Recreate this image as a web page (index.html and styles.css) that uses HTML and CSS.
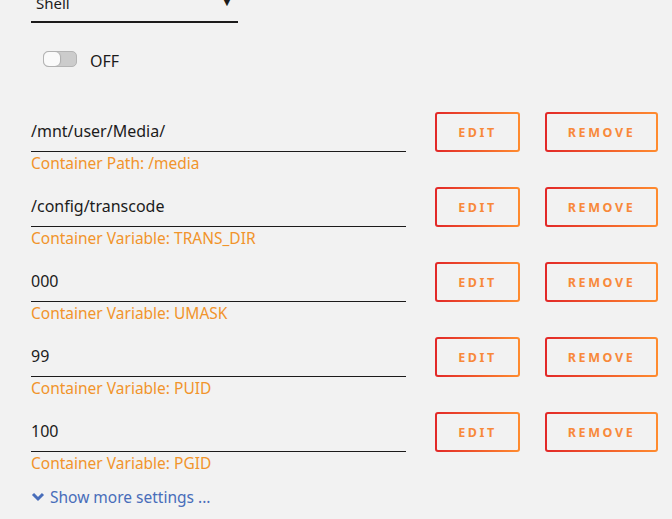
FILE: index.html
```html
<!DOCTYPE html>
<html lang="en">
<head>
    <meta charset="UTF-8">
    <title>Container settings</title>
    <link rel="stylesheet" href="styles.css">
</head>
<body>
    <div class="page">
        <div class="select">
            <span>Shell</span>
            <span class="caret">&#9660;</span>
        </div>

        <div class="switch-row">
            <span class="switch"><span class="knob"></span></span>
            <span class="switch-label">OFF</span>
        </div>

        <div class="rows">
            <div class="row">
                <div class="field">
                    <div class="value">/mnt/user/Media/</div>
                    <div class="hint">Container Path: /media</div>
                </div>
                <button class="btn btn-edit">EDIT</button>
                <button class="btn btn-remove">REMOVE</button>
            </div>
            <div class="row">
                <div class="field">
                    <div class="value">/config/transcode</div>
                    <div class="hint">Container Variable: TRANS_DIR</div>
                </div>
                <button class="btn btn-edit">EDIT</button>
                <button class="btn btn-remove">REMOVE</button>
            </div>
            <div class="row">
                <div class="field">
                    <div class="value">000</div>
                    <div class="hint">Container Variable: UMASK</div>
                </div>
                <button class="btn btn-edit">EDIT</button>
                <button class="btn btn-remove">REMOVE</button>
            </div>
            <div class="row">
                <div class="field">
                    <div class="value">99</div>
                    <div class="hint">Container Variable: PUID</div>
                </div>
                <button class="btn btn-edit">EDIT</button>
                <button class="btn btn-remove">REMOVE</button>
            </div>
            <div class="row">
                <div class="field">
                    <div class="value">100</div>
                    <div class="hint">Container Variable: PGID</div>
                </div>
                <button class="btn btn-edit">EDIT</button>
                <button class="btn btn-remove">REMOVE</button>
            </div>
        </div>

        <a class="more" href="#">
            <svg width="14" height="10" viewBox="0 0 14 10"><path d="M2 2 L7 7 L12 2" fill="none" stroke="#486dba" stroke-width="3"/></svg>
            Show more settings ...
        </a>
    </div>
</body>
</html>
```

FILE: styles.css
```css
*{
    margin: 0;
    padding: 0;
    box-sizing: border-box;
}
body{
    background: #f2f2f2;
    font-family: "Noto Sans", "Open Sans", sans-serif;
    color: #1c1b1b;
    overflow: hidden;
}
.page{
    padding-left: 31px;
    margin-top: -14px;
}
.select{
    width: 207px;
    height: 37px;
    display: flex;
    justify-content: space-between;
    align-items: flex-end;
    padding: 0 5px 8px 5px;
    line-height: 20px;
    border-bottom: 2px solid #1c1b1b;
    font-size: 15px;
}
.caret{
    font-size: 12px;
    line-height: 22px;
}
.switch-row{
    display: flex;
    align-items: center;
    gap: 13px;
    margin-top: 23px;
    padding-left: 12px;
}
.switch{
    width: 34px;
    height: 16px;
    border-radius: 5px;
    background: #cccccc;
    border: 1px solid #b4b4b4;
    position: relative;
}
.knob{
    position: absolute;
    left: 0;
    top: 0;
    width: 16px;
    height: 14px;
    border-radius: 5px;
    background: #fafafa;
    box-shadow: 1px 0 1px rgba(0,0,0,0.15);
}
.switch-label{
    font-size: 16px;
    padding-top: 4px;
}
.rows{
    margin-top: 40px;
    display: flex;
    flex-direction: column;
    gap: 13px;
}
.row{
    display: flex;
    align-items: flex-start;
}
.field{
    width: 375px;
}
.value{
    padding: 9px 0 10px 0;
    line-height: 20px;
    font-size: 16px;
    border-bottom: 1px solid #1c1b1b;
}
.hint{
    line-height: 22px;
    font-size: 15.5px;
    color: #f1942b;
}
.btn{
    height: 40px;
    border: 2px solid transparent;
    border-radius: 3px;
    background: linear-gradient(#f2f2f2, #f2f2f2) padding-box,
                linear-gradient(90deg, #e22828, #ff8c2f) border-box;
    color: #f8893a;
    font-family: "Noto Sans", sans-serif;
    font-weight: bold;
    font-size: 12.5px;
    letter-spacing: 2.6px;
}
.btn-edit{
    width: 85px;
    margin-left: 29px;
}
.btn-remove{
    width: 113px;
    margin-left: 25px;
}
.more{
    display: inline-flex;
    align-items: center;
    gap: 5px;
    margin-top: 13px;
    line-height: 20px;
    font-size: 15.5px;
    color: #486dba;
    text-decoration: none;
}
```
